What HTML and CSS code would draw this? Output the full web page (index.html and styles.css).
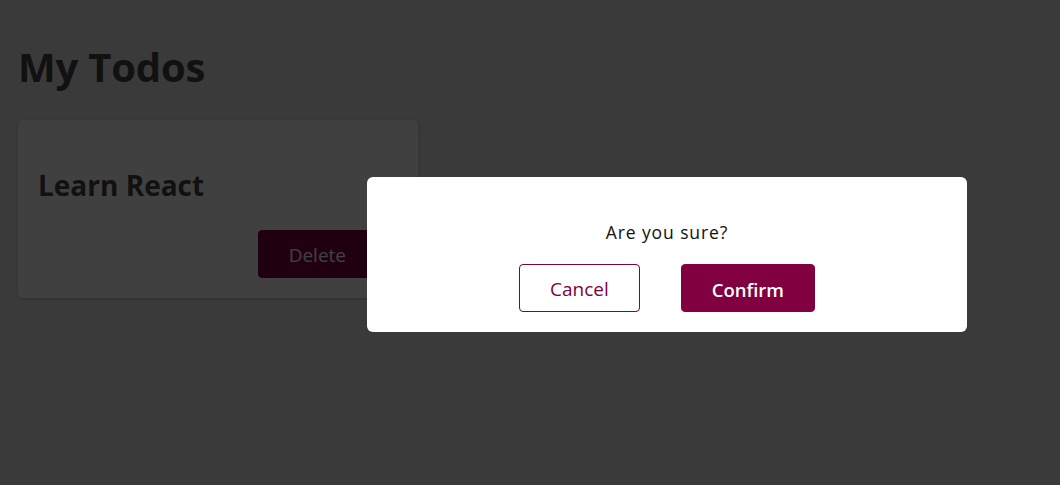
FILE: index.html
```html
<!DOCTYPE html>
<html lang="en">
<head>
<meta charset="utf-8">
<title>My Todos</title>
<link rel="stylesheet" href="styles.css">
</head>
<body>
  <div class="page">
    <h1 class="title">My Todos</h1>
    <div class="card">
      <h2 class="card-title">Learn React</h2>
      <div class="actions">
        <button class="btn">Delete</button>
      </div>
    </div>
  </div>
  <div class="backdrop"></div>
  <div class="modal">
    <p class="modal-text">Are you sure?</p>
    <div class="modal-actions">
      <button class="btn btn-alt">Cancel</button>
      <button class="btn btn-strong">Confirm</button>
    </div>
  </div>
</body>
</html>
```

FILE: styles.css
```css
* { box-sizing: border-box; }

html, body {
  margin: 0;
  height: 100%;
}

body {
  background: #e8e8e8;
  font-family: "Open Sans", "Noto Sans", sans-serif;
  color: #333;
}

.page {
  padding: 0 18px;
}

.title {
  margin: 40px 0 26px;
  font-size: 40px;
  font-weight: 700;
  line-height: 54px;
  letter-spacing: -0.2px;
  color: #444;
}

.card {
  width: 400px;
  background: #fff;
  border-radius: 5px;
  box-shadow: 0 1px 4px rgba(0, 0, 0, 0.2);
  padding: 20px;
}

.card-title {
  margin: 26px 0 25px;
  font-size: 28px;
  font-weight: 700;
  line-height: 39px;
  color: #444;
}

.actions {
  display: flex;
  justify-content: flex-end;
  margin-right: 21px;
}

.btn {
  font-family: "Open Sans", "Noto Sans", sans-serif;
  font-size: 19px;
  height: 48px;
  padding: 2px 30px 0;
  border: 1px solid #800040;
  border-radius: 4px;
  background: #800040;
  color: #fff;
  cursor: pointer;
}

.btn-alt {
  background: #fff;
  color: #800040;
}

.btn-strong {
  font-weight: 600;
  font-size: 18.5px;
}

.backdrop {
  position: fixed;
  inset: 0;
  background: rgba(0, 0, 0, 0.75);
}

.modal {
  position: fixed;
  top: 177px;
  left: 367px;
  width: 600px;
  background: #fff;
  border-radius: 6px;
  padding: 43px 16px 20px;
  text-align: center;
}

.modal-text {
  margin: 0 0 20px;
  font-size: 17.5px;
  line-height: 24px;
  letter-spacing: 0.9px;
  color: #111;
}

.modal-actions {
  display: flex;
  justify-content: center;
  gap: 41px;
}
```
